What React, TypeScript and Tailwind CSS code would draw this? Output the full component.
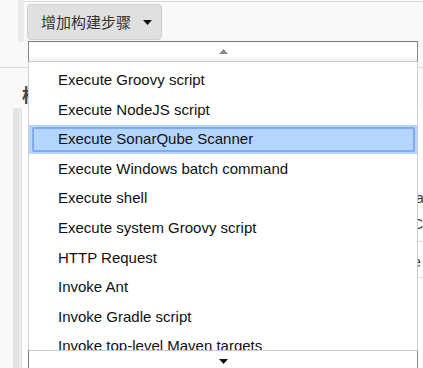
import React from 'react';

const steps = [
  'Execute Groovy script',
  'Execute NodeJS script',
  'Execute SonarQube Scanner',
  'Execute Windows batch command',
  'Execute shell',
  'Execute system Groovy script',
  'HTTP Request',
  'Invoke Ant',
  'Invoke Gradle script',
  'Invoke top-level Maven targets',
  'Run with timeout',
];

const Triangle: React.FC<{ up?: boolean; color: string }> = ({ up, color }) => (
  <svg width="9" height="5" viewBox="0 0 9 5">
    <polygon points={up ? '0,5 9,5 4.5,0' : '0,0 9,0 4.5,5'} fill={color} />
  </svg>
);

const App: React.FC = () => {
  const selected = 2;

  return (
    <div
      className="relative w-[423px] h-[368px] overflow-hidden bg-[#f9f9f9] text-[#333]"
      style={{ fontFamily: '"Liberation Sans", "Noto Sans CJK SC", Arial, sans-serif' }}
    >
      {/* build step section */}
      <div className="flex h-[42px]">
        <div className="w-[18px]" />
        <div className="w-[6px] bg-[#ebebeb]" />
        <div className="flex-1 mt-[1px] border-t border-[#dcdcdc] pl-[3px] pt-[2px]">
          <button className="flex items-center w-[135px] h-[36px] pl-[13px] gap-[12px] rounded-[4px] border border-[#cfcfcf] bg-[#e0e0e0] text-[15px] text-[#333]">
            <span style={{ fontFamily: '"Noto Sans CJK SC", sans-serif' }}>增加构建步骤</span>
            <Triangle color="#111" />
          </button>
        </div>
      </div>

      {/* post-build section */}
      <div className="flex mt-[25px]">
        <div className="w-[5px]" />
        <div className="flex-1 border-t border-[#dcdcdc]">
          <div className="flex">
            <div className="w-[13px]" />
            <div className="flex-1 pl-[9px] pt-[13px] h-[40px] text-[18px] font-bold text-[#444]" style={{ fontFamily: '"Noto Sans CJK SC", sans-serif' }}>
              构建后操作
            </div>
          </div>
          <div className="flex h-[300px]">
            <div className="w-[13px]" />
            <div className="w-[6px] bg-[#e3e3e3]" />
            <div className="w-[2px] bg-[#ececec]" />
            <div className="flex-1 bg-white border-l border-[#ddd]">
              <div className="h-[76px]" />
              <div className="flex flex-col pl-[391px] text-[14px] text-[#333]">
                <div className="h-[28px] pt-[4px]">label</div>
                <div className="h-[30px] pt-[2px] border-b border-[#ddd]">Co</div>
                <div className="h-[36px] pt-[10px] border-b border-[#ddd]">e</div>
              </div>
            </div>
          </div>
        </div>
      </div>

      {/* dropdown menu */}
      <div className="absolute left-[28px] top-[41px] w-[390px] bg-white">
        <div className="h-[21px] flex items-center justify-center border-t border-l border-r border-t-[#777] border-l-[#888] border-r-[#888] border-b border-b-[#ccc] bg-gradient-to-b from-white from-70% to-[#f0f0f0]">
          <Triangle up color="#888" />
        </div>
        <div className="h-[288px] overflow-hidden border-l border-r border-[#cfcfcf] pt-[3.5px]">
          {steps.map((s, i) => (
            <div
              key={s}
              className={`relative h-[29.6px] flex items-center pl-[29px] text-[15px] text-[#111] ${i === selected ? 'bg-[#b4d5fe]' : ''}`}
            >
              {i === selected && (
                <div className="absolute left-[3px] right-[2px] top-[2px] bottom-[2px] rounded-[2px] border-2 border-[#7eabf2]" />
              )}
              <span className="relative">{s}</span>
            </div>
          ))}
        </div>
        <div className="h-[24px] flex justify-center pt-[8px] border-t border-[#ccc] border-l border-l-[#777] border-r border-r-[#888]">
          <div className="h-[5px]">
            <Triangle color="#111" />
          </div>
        </div>
      </div>
    </div>
  );
};

export default App;
